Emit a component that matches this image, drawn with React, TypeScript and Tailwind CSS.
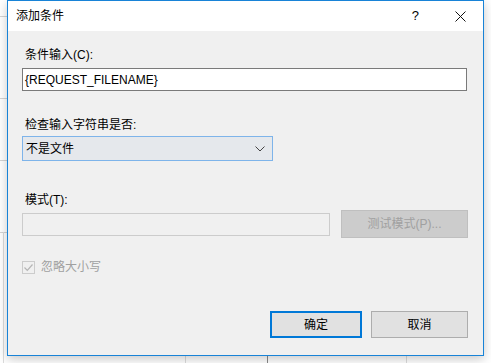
const font = "font-['Liberation_Sans','Noto_Sans_CJK_SC',sans-serif]";

function CheckMark() {
  return (
    <svg width="11" height="11" viewBox="0 0 11 11" fill="none">
      <path d="M1.5 5.5l2.8 2.8L9.5 2.5" stroke="#b5b5b5" strokeWidth="1.2" />
    </svg>
  );
}

export default function App() {
  return (
    <div
      className={`relative h-[363px] w-[491px] overflow-hidden bg-white text-[12px] leading-4 text-[#000] ${font}`}
    >
      {/* desktop content behind the dialog */}
      <div aria-hidden className="absolute left-0 top-[16px] h-px w-[7px] bg-[#d4d4d4]" />
      <div aria-hidden className="absolute left-0 top-[98px] h-px w-[7px] bg-[#d4d4d4]" />
      <div aria-hidden className="absolute left-0 top-[160px] h-px w-[7px] bg-[#d4d4d4]" />
      <div aria-hidden className="absolute left-0 top-[232px] h-px w-[7px] bg-[#d4d4d4]" />
      <div aria-hidden className="absolute left-[3px] top-[232px] h-[131px] w-px bg-[#dcdcdc]" />
      <div aria-hidden className="absolute left-[185px] top-[350px] h-[13px] w-px bg-[#dcdcdc]" />
      <div aria-hidden className="absolute left-[267px] top-[350px] h-[13px] w-px bg-[#8a8a8a]" />
      <div aria-hidden className="absolute left-[406px] top-[350px] h-[13px] w-px bg-[#dcdcdc]" />

      <div className="relative ml-[7px] flex h-[356px] w-[477px] flex-col border border-[#1883d7] bg-[#f0f0f0] shadow-[0_3px_10px_rgba(0,0,0,0.22)]">
        <div className="flex h-[30px] items-center bg-white pl-[8px]">
          <span className="text-[12px]">添加条件</span>
          <span className="ml-auto mr-[36px] text-[13px]">?</span>
          <svg className="mr-[17px]" width="11" height="11" viewBox="0 0 11 11">
            <path d="M0.5 0.5l10 10M10.5 0.5l-10 10" stroke="#111" strokeWidth="1" />
          </svg>
        </div>

        <div className="flex flex-1 flex-col pl-[14px] pr-[15px]">
          <label className="mt-[16px] pl-[3px]">条件输入(C):</label>
          <div className="mt-[5px] flex h-[23px] w-[445px] items-center border border-[#7a7a7a] bg-white pl-[2px]">
            {"{REQUEST_FILENAME}"}
          </div>

          <label className="mt-[26px] pl-[3px]">检查输入字符串是否:</label>
          <div className="mt-[3px] flex h-[25px] w-[251px] items-center border border-[#7eb4ea] border-[#7a9cc2] bg-[#e5e8ec] pl-[3px] pr-[7px]">
            <span>不是文件</span>
            <svg className="ml-auto" width="10" height="6" viewBox="0 0 10 6" fill="none">
              <path d="M0.5 0.5L5 5L9.5 0.5" stroke="#444" strokeWidth="1" />
            </svg>
          </div>

          <label className="mt-[31px] pl-[3px]">模式(T):</label>
          <div className="mt-[2px] flex items-center">
            <div className="h-[23px] w-[308px] border border-[#cccccc] bg-[#f0f0f0]" />
            <div className="ml-[11px] flex h-[28px] w-[127px] items-center justify-center border border-[#bfbfbf] bg-[#cccccc] text-[#a0a0a0]">
              测试模式(P)...
            </div>
          </div>

          <div className="mt-[21px] flex items-center">
            <div className="flex h-[13px] w-[13px] items-center justify-center border border-[#cccccc] bg-[#f0f0f0]">
              <CheckMark />
            </div>
            <span className="ml-[6px] text-[#a0a0a0]">忽略大小写</span>
          </div>

          <div className="mt-auto mb-[17px] flex justify-end">
            <button className="flex h-[27px] w-[92px] items-center justify-center border-2 border-[#0078d7] bg-[#e1e1e1]">
              确定
            </button>
            <button className="ml-[9px] mr-[0px] flex h-[27px] w-[97px] items-center justify-center border border-[#adadad] bg-[#e1e1e1]">
              取消
            </button>
          </div>
        </div>
      </div>
    </div>
  );
}
